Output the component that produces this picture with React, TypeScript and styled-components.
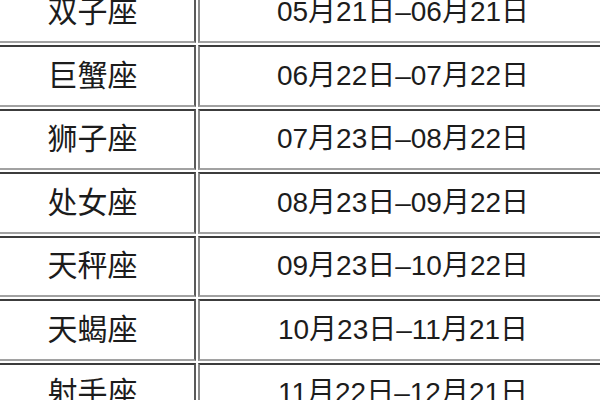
import React from "react";
import styled, { createGlobalStyle } from "styled-components";

const GlobalStyle = createGlobalStyle`
  html, body {
    margin: 0;
    padding: 0;
    background: #ffffff;
    overflow: hidden;
  }
`;

const signs = [
  { name: "双子座", range: "05月21日–06月21日" },
  { name: "巨蟹座", range: "06月22日–07月22日" },
  { name: "狮子座", range: "07月23日–08月22日" },
  { name: "处女座", range: "08月23日–09月22日" },
  { name: "天秤座", range: "09月23日–10月22日" },
  { name: "天蝎座", range: "10月23日–11月21日" },
  { name: "射手座", range: "11月22日–12月21日" },
];

const App = () => {
  return (
    <Page>
      <GlobalStyle />
      <Table>
        {signs.map((s) => (
          <Row key={s.name}>
            <Cell size={30}>{s.name}</Cell>
            <Cell size={28}>{s.range}</Cell>
          </Row>
        ))}
      </Table>
    </Page>
  );
};

export default App;

const Page = styled.div`
  width: 600px;
  height: 400px;
  overflow: hidden;
  background: #ffffff;
`;

const Table = styled.div`
  display: flex;
  flex-direction: column;
  gap: 2px;
  width: 619px;
  margin-left: -11px;
  margin-top: -18.5px;
`;

const Row = styled.div`
  display: grid;
  grid-template-columns: 207px 410px;
  gap: 2px;
  height: 61.5px;
`;

const Cell = styled.div<{ size: number }>`
  box-sizing: border-box;
  display: flex;
  align-items: center;
  justify-content: center;
  padding-bottom: 6px;
  border-style: solid;
  border-width: 2px;
  border-color: #3c3c3c #5a5a5a #a2a2a2 #8c8c8c;
  font-family: "Liberation Sans", "Noto Sans CJK SC", sans-serif;
  font-size: ${({ size }) => size}px;
  color: #1c1c1c;
  white-space: nowrap;
`;
